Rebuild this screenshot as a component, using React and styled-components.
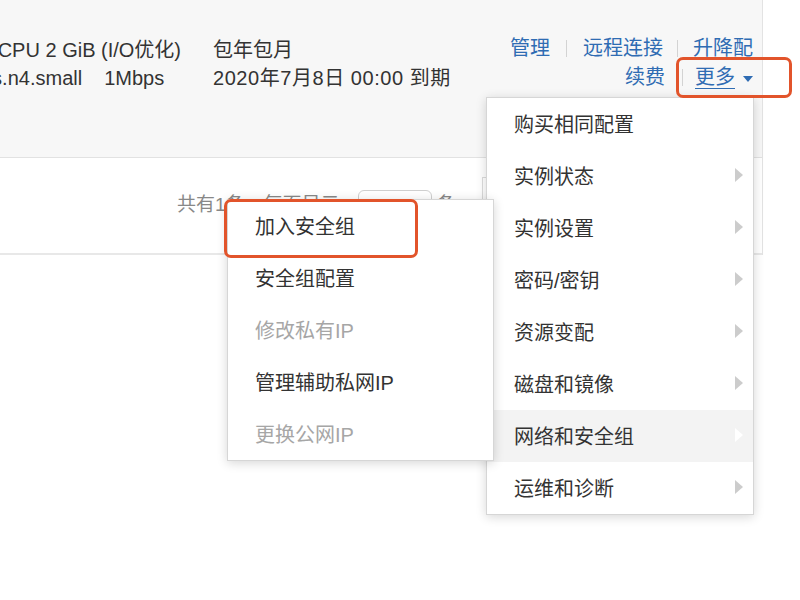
import React from 'react';
import styled, { createGlobalStyle } from 'styled-components';

const GlobalStyle = createGlobalStyle`
  html, body {
    margin: 0;
    padding: 0;
    background: #fff;
  }
  body {
    font-family: "Liberation Sans", "Noto Sans CJK SC", sans-serif;
  }
`;

const Page = styled.div`
  position: relative;
  width: 800px;
  height: 600px;
  overflow: hidden;
  background: #fff;
`;

const Table = styled.div`
  width: 763px;
  border-right: 1px solid #e3e3e3;
  box-sizing: border-box;
`;

const InstanceRow = styled.div`
  display: flex;
  height: 158px;
  padding-top: 36px;
  box-sizing: border-box;
  background: #f7f7f7;
  border-bottom: 1px solid #e2e2e2;
`;

const Cell = styled.div`
  display: flex;
  flex-direction: column;
  width: ${(p) => p.$width || 'auto'};
  flex: ${(p) => (p.$grow ? 1 : 'none')};
  margin-left: ${(p) => p.$offset || 0}px;
  font-size: 20px;
  line-height: 28px;
  color: #333;
  white-space: nowrap;
`;

const Expiry = styled.span`
  letter-spacing: 0.55px;
`;

const Gap = styled.span`
  display: inline-block;
  width: 22px;
`;

const Actions = styled.div`
  display: flex;
  flex-direction: column;
  align-items: flex-end;
  margin-top: -2px;
  padding-right: 9px;
  font-size: 20px;
  line-height: 29px;
`;

const LinkRow = styled.div`
  display: flex;
  align-items: center;
`;

const Link = styled.a`
  color: #2f6cb3;
  text-decoration: ${(p) => (p.$underline ? 'underline' : 'none')};
  text-underline-offset: 4px;
  text-decoration-thickness: 1px;
  cursor: pointer;
`;

const Separator = styled.span`
  display: inline-block;
  width: 1px;
  height: 17px;
  background: #d3d3d3;
  margin: 0 ${(p) => p.$after ?? 16}px 0 ${(p) => p.$before ?? 16}px;
`;

const Caret = styled.span`
  display: inline-block;
  margin-left: 8px;
  margin-top: 2px;
  border-top: 6px solid #2f6cb3;
  border-left: 5px solid transparent;
  border-right: 5px solid transparent;
`;

const PagerRow = styled.div`
  display: flex;
  align-items: center;
  height: 97px;
  padding: 0 0 6px 177px;
  box-sizing: border-box;
  border-bottom: 2px solid #e8e8e8;
  font-size: 19px;
  color: #888;
`;

const PageSize = styled.div`
  width: 74px;
  height: 26px;
  margin: 0 5px 0 18px;
  border: 1px solid #cfcfcf;
  border-radius: 6px;
  box-sizing: border-box;
`;

const Pager = styled.div`
  width: 270px;
  height: 54px;
  margin-left: 26px;
  margin-top: 2px;
  border: 1px solid #dcdcdc;
  box-sizing: border-box;
`;

const Menu = styled.ul`
  position: absolute;
  top: ${(p) => p.$top}px;
  left: ${(p) => p.$left}px;
  width: ${(p) => p.$width}px;
  margin: 0;
  padding: 0;
  list-style: none;
  background: #fff;
  border: 1px solid #d6d6d6;
  box-shadow: 0 2px 10px rgba(0, 0, 0, 0.16);
  z-index: ${(p) => p.$layer || 1};
`;

const MenuItem = styled.li`
  display: flex;
  align-items: center;
  justify-content: space-between;
  height: 52px;
  padding: 0 10px 2px 27px;
  box-sizing: border-box;
  font-size: 20px;
  color: ${(p) => (p.$disabled ? '#a6a6a6' : '#333')};
  background: ${(p) => (p.$active ? '#f3f3f3' : '#fff')};
  white-space: nowrap;
`;

const Arrow = styled.span`
  width: 0;
  height: 0;
  border-left: 8px solid ${(p) => (p.$active ? '#fff' : '#cccccc')};
  border-top: 7px solid transparent;
  border-bottom: 7px solid transparent;
`;

const Highlight = styled.div`
  position: absolute;
  top: ${(p) => p.$top}px;
  left: ${(p) => p.$left}px;
  width: ${(p) => p.$width}px;
  height: ${(p) => p.$height}px;
  border: 3px solid #e2542b;
  border-radius: 7px;
  box-sizing: border-box;
  z-index: 5;
`;

const moreItems = [
  { label: '购买相同配置' },
  { label: '实例状态', sub: true },
  { label: '实例设置', sub: true },
  { label: '密码/密钥', sub: true },
  { label: '资源变配', sub: true },
  { label: '磁盘和镜像', sub: true },
  { label: '网络和安全组', sub: true, active: true },
  { label: '运维和诊断', sub: true },
];

const networkItems = [
  { label: '加入安全组' },
  { label: '安全组配置' },
  { label: '修改私有IP', disabled: true },
  { label: '管理辅助私网IP' },
  { label: '更换公网IP', disabled: true },
];

const App = () => (
  <Page>
    <GlobalStyle />
    <Table>
      <InstanceRow>
        <Cell $width="242px" $offset={-29}>
          <span>1 vCPU 2 GiB (I/O优化)</span>
          <span>
            ecs.n4.small<Gap />1Mbps
          </span>
        </Cell>
        <Cell $grow>
          <span>包年包月</span>
          <Expiry>2020年7月8日 00:00 到期</Expiry>
        </Cell>
        <Actions>
          <LinkRow>
            <Link>管理</Link>
            <Separator />
            <Link>远程连接</Link>
            <Separator $before={14} $after={15} />
            <Link>升降配</Link>
          </LinkRow>
          <LinkRow>
            <Link>续费</Link>
            <Separator $before={17} $after={12} />
            <Link $underline>更多</Link>
            <Caret />
          </LinkRow>
        </Actions>
      </InstanceRow>
      <PagerRow>
        共有1条，每页显示
        <PageSize />
        条
        <Pager />
      </PagerRow>
    </Table>

    <Menu $top={97} $left={486} $width={266}>
      {moreItems.map((item) => (
        <MenuItem key={item.label} $active={item.active}>
          {item.label}
          {item.sub && <Arrow $active={item.active} />}
        </MenuItem>
      ))}
    </Menu>

    <Menu $top={199} $left={227} $width={265} $layer={2}>
      {networkItems.map((item) => (
        <MenuItem key={item.label} $disabled={item.disabled}>
          {item.label}
        </MenuItem>
      ))}
    </Menu>

    <Highlight $top={57} $left={676} $width={116} $height={41} />
    <Highlight $top={199} $left={224} $width={194} $height={59} />
  </Page>
);

export default App;
